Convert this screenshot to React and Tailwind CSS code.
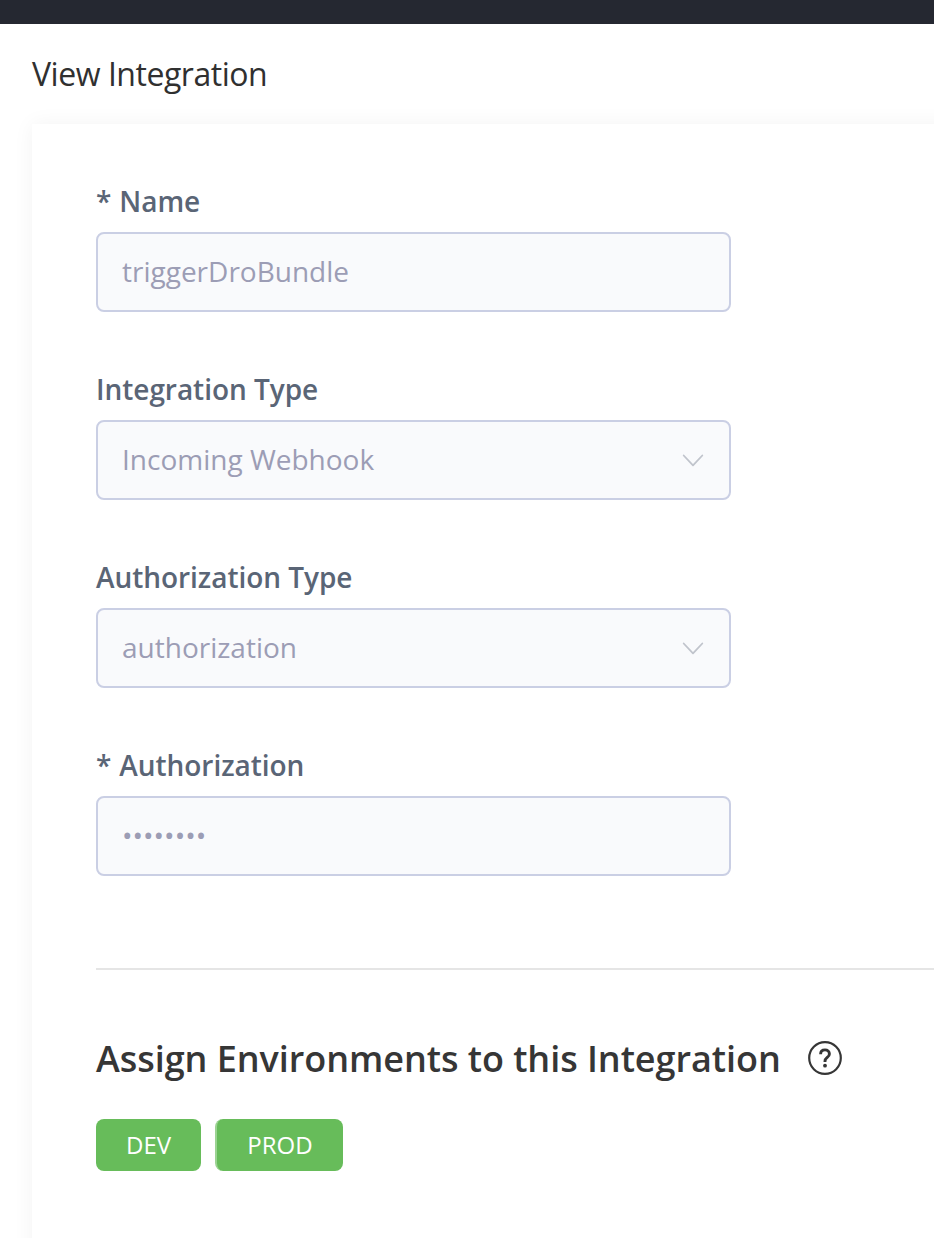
function Chevron() {
  return (
    <svg className="mt-px h-6 w-6 shrink-0" viewBox="0 0 24 24" fill="none" stroke="#c0c4cc" strokeWidth="1.8" strokeLinecap="round" strokeLinejoin="round">
      <path d="M2.700 6.500 12 16.300l9.300-9.800" />
    </svg>
  );
}

function HelpIcon() {
  return (
    <svg className="mb-[3px] h-9 w-9 shrink-0" viewBox="0 0 36 36" fill="none" stroke="#363636">
      <circle cx="18" cy="18" r="15.800" strokeWidth="2.200" />
      <path d="M13.600 14.200c0-2.800 1.800-4.300 4.400-4.300s4.400 1.600 4.400 4c0 3.600-4.400 3.500-4.400 7.300v.800" strokeWidth="2.900" />
      <circle cx="18" cy="25.700" r="1.900" fill="#363636" stroke="none" />
    </svg>
  );
}

function Field({ label, value, required, select }) {
  return (
    <div className="mb-12 w-[635px]">
      <div className="flex h-[60px] items-center gap-2 pb-0.5 text-[28px] font-semibold tracking-[-0.04px] text-[#5a6576]">
        {required && <span>*</span>}
        <span>{label}</span>
      </div>
      <div className="flex h-20 items-center justify-between rounded-lg border-2 border-[#cacfe4] bg-[#f9fafc] px-6 text-[28px] text-[#9c9db5]">
        <span className="pb-0.5">{value}</span>
        {select && <Chevron />}
      </div>
    </div>
  );
}

export default function App() {
  return (
    <div className="h-[1238px] w-full overflow-hidden bg-white font-['Open_Sans',sans-serif]">
      <header className="h-6 bg-[#252831]" />
      <h1 className="flex h-[100px] items-center pl-8 text-[32px] tracking-[-0.47px] text-[#303030]">View Integration</h1>
      <main className="ml-8 h-[1200px] w-[1000px] bg-white px-16 pt-12 shadow-[0_0_20px_rgba(0,0,0,0.05)]">
        <Field label="Name" value="triggerDroBundle" required />
        <Field label="Integration Type" value="Incoming Webhook" select />
        <Field label="Authorization Type" value="authorization" select />
        <Field label="Authorization" value="••••••••" required />
        <hr className="mt-[92px] border-t-2 border-[#e5e5e5]" />
        <div className="mt-[60px] flex h-[60px] items-center gap-[26px] pb-0.5">
          <h2 className="text-[36px] font-semibold tracking-[-0.05px] text-[#363636]">Assign Environments to this Integration</h2>
          <HelpIcon />
        </div>
        <div className="mt-[29px] flex gap-[14px] text-2xl text-white">
          <span className="flex h-[52px] w-[105px] items-center justify-center rounded-lg bg-[#67bc5a]">DEV</span>
          <span className="flex h-[52px] w-[128px] items-center justify-center rounded-lg border-l-2 border-[#9bd392] bg-[#67bc5a]">PROD</span>
        </div>
      </main>
    </div>
  );
}
